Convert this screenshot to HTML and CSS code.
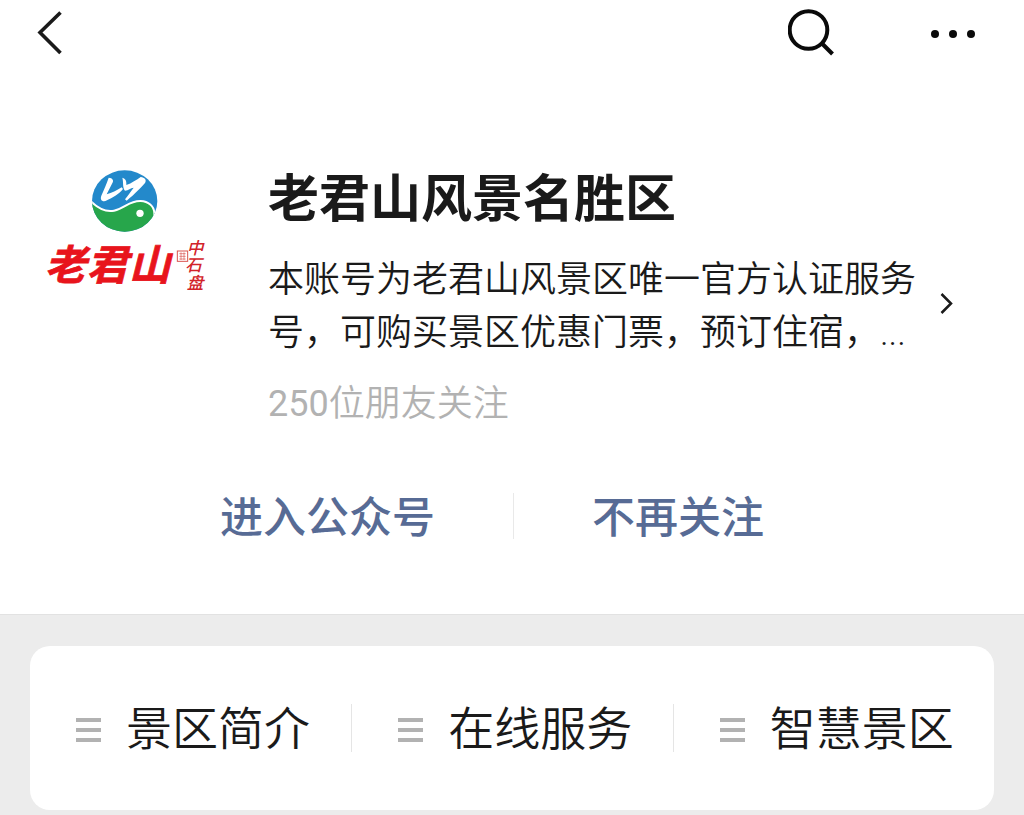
FILE: index.html
```html
<!DOCTYPE html>
<html lang="zh-CN">
<head>
<meta charset="utf-8">
<meta name="viewport" content="width=device-width, initial-scale=1">
<title>老君山风景名胜区</title>
<link rel="stylesheet" href="styles.css">
</head>
<body>
<header class="topbar">
  <button class="icon-button" type="button" aria-label="返回">
    <svg width="26" height="44" viewBox="0 0 26 44"><path d="M23.500 1.500 3 21.500 23.500 42" fill="none" stroke="#1a1a1a" stroke-width="3.600"/></svg>
  </button>
  <div class="topbar-tools">
    <button class="icon-button" type="button" aria-label="搜索">
      <svg width="48" height="48" viewBox="0 0 48 48" fill="none" stroke="#0a0a0a" stroke-width="4"><circle cx="20.500" cy="21" r="18.800"/><path d="M33.500 34 44.500 45"/></svg>
    </button>
    <button class="icon-button" type="button" aria-label="更多">
      <svg width="46" height="12" viewBox="0 0 46 12" fill="#0a0a0a"><circle cx="5" cy="7" r="4"/><circle cx="23" cy="7" r="4"/><circle cx="41" cy="7" r="4"/></svg>
    </button>
  </div>
</header>

<main>
  <section class="profile">
    <svg class="logo" viewBox="0 0 570 450" role="img" aria-label="老君山">
      <defs><clipPath id="disc"><ellipse cx="284" cy="138" rx="98" ry="92"/></clipPath></defs>
      <g clip-path="url(#disc)">
        <path fill="#2389cb" d="M180 40h210v200H180z"/>
        <path fill="#27a64b" stroke="#fff" stroke-width="6" d="M176 132C204 163 227 172 252 167C287 160 295 137 332 138C355 139 372 153 373 174C375 198 356 217 335 240H176Z"/>
      </g>
      <circle cx="330" cy="175" r="11" fill="#fff"/>
      <g fill="#fff">
        <path d="M236 68C248 69 253 76 246 86L230 118C245 114 260 107 275 97L279 102C266 119 247 128 231 136C218 143 209 135 214 122C222 103 230 87 236 68Z"/>
        <path d="M277 68C287 71 290 78 289 90C305 85 320 74 332 66C344 67 351 75 345 84C331 99 316 116 290 137L285 133C294 122 303 109 311 98C301 99 296 106 285 107C277 98 281 82 277 68Z"/>
      </g>
      <g class="logo-name">
        <text x="44" y="374">老</text>
        <text x="170" y="374">君</text>
        <text x="296" y="374">山</text>
      </g>
      <g class="logo-motto">
        <text x="470" y="297">中</text>
        <text x="466" y="349">石</text>
        <text x="470" y="401">盘</text>
      </g>
      <rect x="442" y="288" width="31" height="31" fill="none" stroke="#d9544f" stroke-width="3"/>
      <path d="M448 296h19M448 304h19M448 312h19M453 292v23M462 292v23" stroke="#d9544f" stroke-width="2"/>
    </svg>
    <div class="info">
      <h1 class="name">老君山风景名胜区</h1>
      <div class="intro">
        <p class="description">本账号为老君山风景区唯一官方认证服务号，可购买景区优惠门票，预订住宿，...</p>
        <svg class="chevron" width="14" height="28" viewBox="0 0 14 28"><path d="M1.500 1 11 10.500 1.500 20" fill="none" stroke="#1a1a1a" stroke-width="2.500"/></svg>
      </div>
      <p class="followers"><span class="count">250</span>位朋友关注</p>
    </div>
  </section>

  <div class="actions">
    <button class="action" type="button">进入公众号</button>
    <span class="action-divider"></span>
    <button class="action" type="button">不再关注</button>
  </div>

  <section class="services">
    <nav class="menu">
      <button class="menu-item" type="button"><span class="bars"></span>景区简介</button>
      <button class="menu-item" type="button"><span class="bars"></span>在线服务</button>
      <button class="menu-item" type="button"><span class="bars"></span>智慧景区</button>
    </nav>
  </section>
</main>
</body>
</html>
```
FILE: styles.css
```css
* {
  box-sizing: border-box;
}

body {
  margin: 0;
  min-height: 100vh;
  display: flex;
  flex-direction: column;
  background: #fff;
  color: #1a1a1a;
  font-family: Roboto, "Noto Sans CJK SC", sans-serif;
}

h1,
p {
  margin: 0;
}

button {
  margin: 0;
  padding: 0;
  border: 0;
  background: none;
  color: inherit;
  font: inherit;
  cursor: pointer;
}

svg {
  display: block;
  flex: none;
}

main {
  flex: 1;
  display: flex;
  flex-direction: column;
}

.topbar {
  display: flex;
  justify-content: space-between;
  align-items: center;
  height: 66px;
  padding: 0 48px 0 37px;
}

.topbar-tools {
  display: flex;
  align-items: center;
  gap: 94px;
}

.profile {
  display: flex;
  align-items: flex-start;
  gap: 48px;
  padding: 89px 70px 0 30px;
}

.logo {
  width: 190px;
  height: 150px;
}

.logo-name {
  fill: #e8141c;
  stroke: #e8141c;
  stroke-width: 2px;
  font-size: 124px;
  font-style: italic;
  font-weight: 700;
}

.logo-motto {
  fill: #d2232a;
  font-size: 50px;
  font-style: italic;
  font-weight: 500;
}

.info {
  flex: 1;
  padding-top: 15px;
}

.name {
  font-size: 51px;
  line-height: 60px;
  font-weight: 700;
}

.intro {
  display: flex;
  align-items: center;
  justify-content: space-between;
  gap: 20px;
  margin-top: 24px;
}

.description {
  font-size: 36px;
  line-height: 53px;
  font-weight: 350;
}

.followers {
  margin-top: 20px;
  color: #b2b2b2;
  font-size: 36px;
  line-height: 48px;
  font-weight: 350;
}

.count {
  font-weight: 400;
}

.actions {
  display: flex;
  justify-content: center;
  align-items: center;
  gap: 78px;
  margin-top: 63px;
  padding-right: 40px;
}

.action {
  padding-top: 4px;
  color: #576b95;
  font-size: 43px;
  line-height: 46px;
  font-weight: 500;
}

.action-divider {
  width: 1px;
  height: 46px;
  background: #e9e9e9;
}

.services {
  flex: 1;
  margin-top: 73px;
  padding: 31px 30px 5px;
  border-top: 1px solid #e2e2e2;
  background: #ececec;
}

.menu {
  display: grid;
  grid-template-columns: repeat(3, 1fr);
  padding: 58px 0;
  border-radius: 20px;
  background: #fff;
}

.menu-item {
  display: flex;
  align-items: center;
  gap: 25px;
  padding: 3px 0 0 46px;
  font-size: 46px;
  line-height: 45px;
  font-weight: 350;
  white-space: nowrap;
}

.menu-item + .menu-item {
  border-left: 1px solid #e5e5e5;
}

.bars {
  width: 25px;
  height: 24px;
  background: repeating-linear-gradient(#b2b2b2 0 4px, transparent 4px 10px);
}
```
